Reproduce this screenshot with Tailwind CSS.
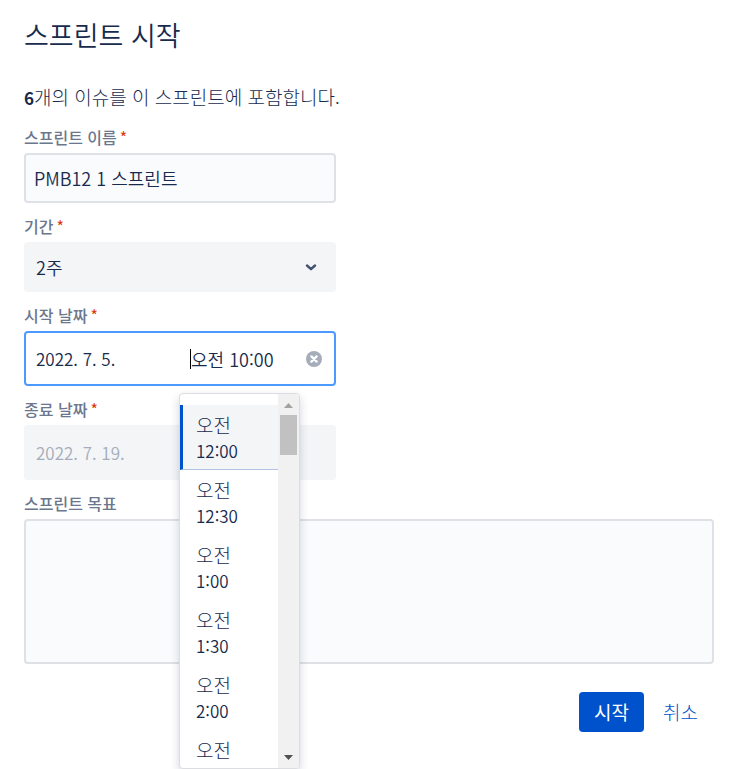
<!DOCTYPE html>
<html lang="ko">
<head>
  <meta charset="UTF-8">
  <meta name="viewport" content="width=device-width, initial-scale=1.0">
  <title>스프린트 시작</title>
  <script src="https://cdn.jsdelivr.net/npm/@tailwindcss/browser@4"></script>
</head>
<body class="min-h-screen bg-white text-[#172b4d] font-['Noto_Sans_CJK_KR',sans-serif]">

  <main class="pl-6 pr-[22px] pt-[15px]">
    <h1 class="text-[27px] leading-10 font-[350]">스프린트 시작</h1>
    <p class="mt-7 text-[19px] leading-7 font-light"><strong class="font-bold text-[17px]">6</strong>개의 이슈를 이 스프린트에 포함합니다.</p>

    <form>
      <!-- Short fields -->
      <div class="w-full max-w-[312px]">
        <label for="name" class="block mt-[15px] mb-[6px] h-5 text-base leading-5 font-medium text-[#6b778c]">스프린트 이름<span class="ml-[3px] text-base leading-5 font-normal text-[#de350b]">*</span></label>
        <input id="name" type="text" value="PMB12 1 스프린트" class="block w-full h-[50px] px-2 rounded-[4px] border-2 border-[#dfe1e6] bg-[#fafbfc] text-lg font-[350] outline-none">

        <label for="duration" class="block mt-[13px] mb-[6px] h-5 text-base leading-5 font-medium text-[#6b778c]">기간<span class="ml-[3px] text-base leading-5 font-normal text-[#de350b]">*</span></label>
        <div class="relative">
          <select id="duration" class="block w-full h-[50px] px-3 appearance-none rounded-[4px] bg-[#f4f5f7] text-lg font-[350] outline-none">
            <option>2주</option>
          </select>
          <svg class="absolute right-[19px] top-[19px] size-3 pointer-events-none" viewBox="0 0 12 12" fill="none" stroke="#42526e" stroke-width="2.4" stroke-linecap="round" stroke-linejoin="round"><path d="M2 4.5l4 3.7 4-3.7"/></svg>
        </div>

        <label for="start-date" class="block mt-[13px] mb-[6px] h-5 text-base leading-5 font-medium text-[#6b778c]">시작 날짜<span class="ml-[3px] text-base leading-5 font-normal text-[#de350b]">*</span></label>
        <div class="relative flex items-center h-[55px] px-[10px] rounded-[4px] border-2 border-[#4c9aff] bg-white">
          <input id="start-date" type="text" value="2022. 7. 5." class="w-[154px] text-[17px] font-[350] outline-none">
          <span class="w-px h-5 bg-black"></span>
          <input type="text" value="오전 10:00" aria-label="시작 시간" class="min-w-0 flex-1 text-lg font-[350] outline-none">
          <button type="button" aria-label="지우기" class="shrink-0 mr-0.5">
            <svg class="size-4" viewBox="0 0 16 16"><circle cx="8" cy="8" r="8" fill="#a5adba"/><path d="M5.4 5.4l5.2 5.2M10.6 5.4l-5.2 5.2" stroke="#fff" stroke-width="2.4" stroke-linecap="round"/></svg>
          </button>

          <!-- Time menu -->
          <div class="absolute left-[153px] top-[60px] z-10 flex w-[121px] h-[376px] overflow-hidden rounded-[4px] border border-[#dcdde0] bg-white shadow-[0_4px_10px_rgba(9,30,66,0.18)]">
            <ul role="listbox" aria-label="시간" class="flex-1 pt-[11px] text-[17px] leading-[26px] font-[350]">
              <li role="option" aria-selected="true" class="h-[65px] pl-[13px] pt-[7px] border-l-[3px] border-l-[#0052cc] border-b border-b-[#b3c4e3] bg-[#f4f5f7]"><span class="block text-[19px] leading-[26px] font-light">오전</span>12:00</li>
              <li role="option" class="h-[65px] pl-4 pt-[7px]"><span class="block text-[19px] leading-[26px] font-light">오전</span>12:30</li>
              <li role="option" class="h-[65px] pl-4 pt-[7px]"><span class="block text-[19px] leading-[26px] font-light">오전</span>1:00</li>
              <li role="option" class="h-[65px] pl-4 pt-[7px]"><span class="block text-[19px] leading-[26px] font-light">오전</span>1:30</li>
              <li role="option" class="h-[65px] pl-4 pt-[7px]"><span class="block text-[19px] leading-[26px] font-light">오전</span>2:00</li>
              <li role="option" class="h-[65px] pl-4 pt-[7px]"><span class="block text-[19px] leading-[26px] font-light">오전</span></li>
            </ul>
            <div class="flex flex-col items-center w-[21px] bg-[#f1f1f1]">
              <svg class="mt-[9px] w-[9px] h-[5px]" viewBox="0 0 9 5" fill="#a3a3a3"><path d="M4.500 0L9 5H0z"/></svg>
              <div class="mt-[7px] w-[17px] h-10 bg-[#c1c1c1]"></div>
              <svg class="mt-auto mb-2 w-[9px] h-[5px]" viewBox="0 0 9 5" fill="#505050"><path d="M0 0h9L4.500 5z"/></svg>
            </div>
          </div>
        </div>

        <label for="end-date" class="block mt-[13px] mb-[6px] h-5 text-base leading-5 font-medium text-[#6b778c]">종료 날짜<span class="ml-[3px] text-base leading-5 font-normal text-[#de350b]">*</span></label>
        <input id="end-date" type="text" value="2022. 7. 19." disabled class="block w-full h-[55px] px-3 rounded-[4px] bg-[#f4f5f7] text-[17px] font-[350] text-[#a5adba]">
      </div>

      <label for="goal" class="block mt-[13px] mb-[6px] h-5 text-base leading-5 font-medium text-[#6b778c]">스프린트 목표</label>
      <textarea id="goal" class="block w-full h-[145px] p-2 resize-none rounded-[4px] border-2 border-[#dfe1e6] bg-[#fafbfc] outline-none"></textarea>

      <div class="flex justify-end gap-[3px] mt-7">
        <button type="submit" class="h-10 px-[15px] rounded-[4px] bg-[#0052cc] text-[19px] text-white">시작</button>
        <button type="button" class="h-10 px-4 text-[19px] font-light text-[#0052cc]">취소</button>
      </div>
    </form>
  </main>

</body>
</html>
